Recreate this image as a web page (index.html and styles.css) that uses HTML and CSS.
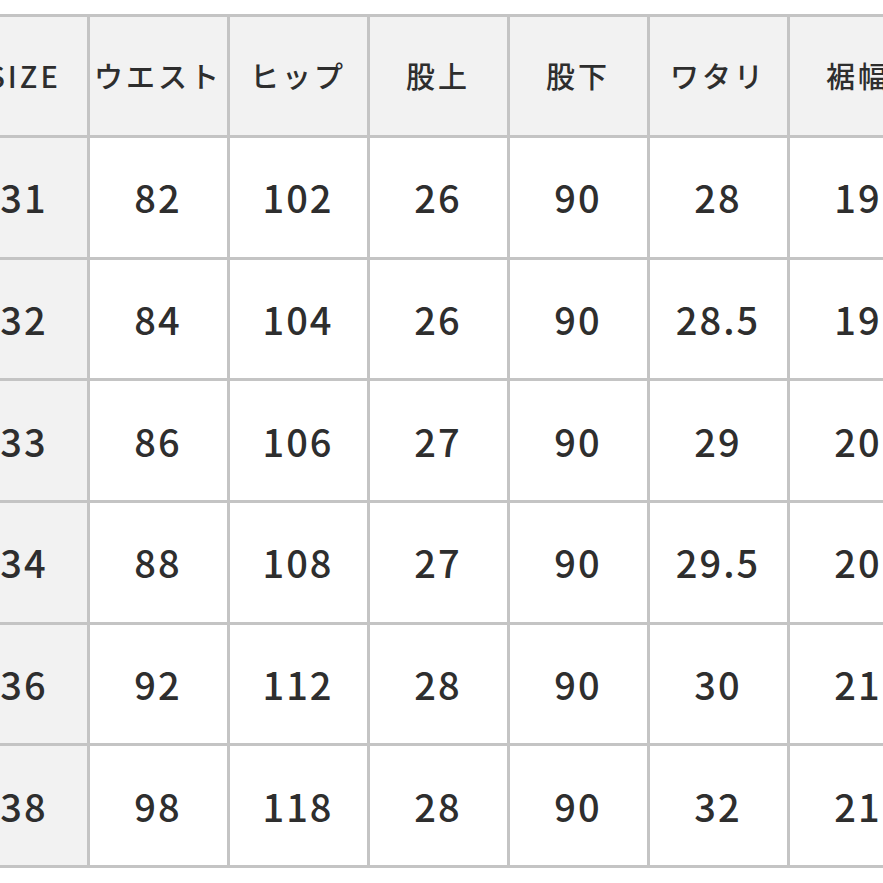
FILE: index.html
```html
<!DOCTYPE html>
<html lang="ja">
<head>
<meta charset="utf-8">
<title>サイズ表</title>
<link rel="stylesheet" href="styles.css">
</head>
<body>
<div class="table">
  <div class="cell head">SIZE</div>
  <div class="cell head">ウエスト</div>
  <div class="cell head">ヒップ</div>
  <div class="cell head">股上</div>
  <div class="cell head">股下</div>
  <div class="cell head">ワタリ</div>
  <div class="cell head">裾幅</div>

  <div class="cell size">31</div><div class="cell">82</div><div class="cell">102</div><div class="cell">26</div><div class="cell">90</div><div class="cell">28</div><div class="cell">19</div>
  <div class="cell size">32</div><div class="cell">84</div><div class="cell">104</div><div class="cell">26</div><div class="cell">90</div><div class="cell">28.5</div><div class="cell">19</div>
  <div class="cell size">33</div><div class="cell">86</div><div class="cell">106</div><div class="cell">27</div><div class="cell">90</div><div class="cell">29</div><div class="cell">20</div>
  <div class="cell size">34</div><div class="cell">88</div><div class="cell">108</div><div class="cell">27</div><div class="cell">90</div><div class="cell">29.5</div><div class="cell">20</div>
  <div class="cell size">36</div><div class="cell">92</div><div class="cell">112</div><div class="cell">28</div><div class="cell">90</div><div class="cell">30</div><div class="cell">21</div>
  <div class="cell size">38</div><div class="cell">98</div><div class="cell">118</div><div class="cell">28</div><div class="cell">90</div><div class="cell">32</div><div class="cell">21</div>
</div>
</body>
</html>
```
FILE: styles.css
```css
html, body {
  margin: 0;
  padding: 0;
  background: #ffffff;
  overflow: hidden;
  width: 883px;
  height: 883px;
}

.table {
  display: grid;
  grid-template-columns: 128px repeat(6, 140px);
  grid-template-rows: repeat(7, 121.667px);
  width: max-content;
  margin-top: 13.5px;
  margin-left: -41.5px;
  border-top: 3px solid #c4c4c4;
  border-left: 3px solid #c4c4c4;
  font-family: "Noto Sans CJK JP", "Noto Sans", sans-serif;
  font-weight: 500;
  color: #2e2e2e;
}

.cell {
  box-sizing: border-box;
  border-right: 3px solid #c4c4c4;
  border-bottom: 3px solid #c4c4c4;
  display: flex;
  align-items: center;
  justify-content: center;
  background: #ffffff;
  font-size: 38px;
  letter-spacing: 2px;
  line-height: 1;
}

.head {
  background: #f2f2f2;
  font-size: 29px;
  letter-spacing: 3px;
}

.size {
  background: #f2f2f2;
}
```
